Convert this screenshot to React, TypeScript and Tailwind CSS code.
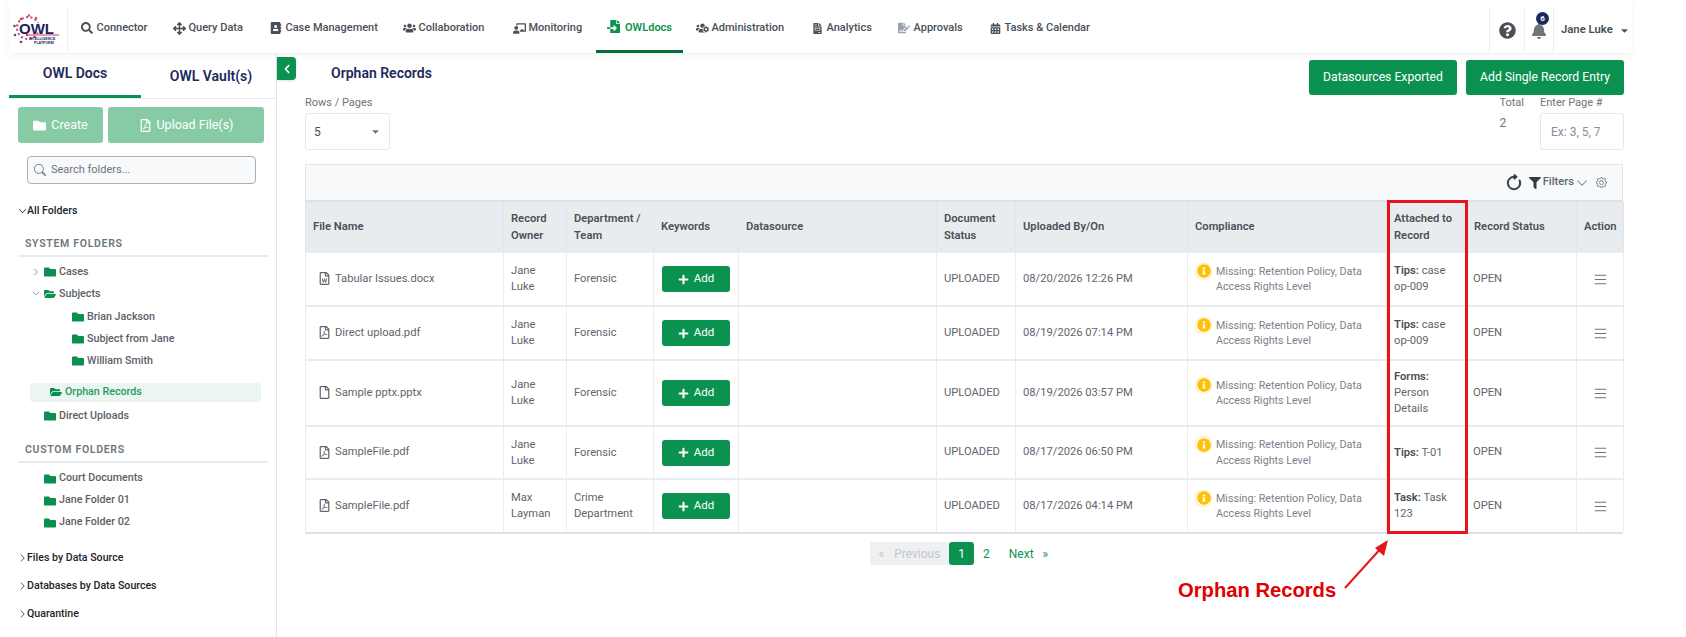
import { ReactNode } from 'react'
import {
  FaAddressBook,
  FaArrowsAlt,
  FaBell,
  FaCalendarAlt,
  FaCaretDown,
  FaChalkboardTeacher,
  FaFileImport,
  FaFileInvoice,
  FaFileSignature,
  FaFilter,
  FaFolder,
  FaFolderOpen,
  FaInfoCircle,
  FaPlus,
  FaQuestionCircle,
  FaRegFile,
  FaRegFilePdf,
  FaRegFileWord,
  FaSearch,
  FaUsers,
  FaUsersCog,
  FaChevronLeft,
} from 'react-icons/fa'
import { BsArrowClockwise, BsChevronDown, BsChevronRight, BsGear, BsList, BsSearch } from 'react-icons/bs'

const navItems = [
  { label: 'Connector', icon: <FaSearch size={12} />, w: 'w-[51px]' },
  { label: 'Query Data', icon: <FaArrowsAlt size={13} />, w: 'w-[56px]' },
  { label: 'Case Management', icon: <FaAddressBook size={12} />, w: 'w-[92px]' },
  { label: 'Collaboration', icon: <FaUsers size={14} />, w: 'w-[69px]' },
  { label: 'Monitoring', icon: <FaChalkboardTeacher size={15} />, w: 'w-[55px]' },
]

const navItemsAfter = [
  { label: 'Administration', icon: <FaUsersCog size={14} />, w: 'w-[74px]' },
  { label: 'Analytics', icon: <FaFileInvoice size={11} />, w: 'w-[46px]' },
  { label: 'Approvals', icon: <FaFileSignature size={12} className="text-gray-400" />, w: 'w-[50px]' },
  { label: 'Tasks & Calendar', icon: <FaCalendarAlt size={11} />, w: 'w-[87px]' },
]

const rows = [
  { file: 'Tabular Issues.docx', icon: <FaRegFileWord size={13} />, owner: ['Jane', 'Luke'], dept: ['Forensic'], at: '08/20/2026 12:26 PM', kind: 'Tips:', rec: ['case', 'op-009'], h: 'h-[54px]' },
  { file: 'Direct upload.pdf', icon: <FaRegFilePdf size={13} />, owner: ['Jane', 'Luke'], dept: ['Forensic'], at: '08/19/2026 07:14 PM', kind: 'Tips:', rec: ['case', 'op-009'], h: 'h-[54px]' },
  { file: 'Sample pptx.pptx', icon: <FaRegFile size={13} />, owner: ['Jane', 'Luke'], dept: ['Forensic'], at: '08/19/2026 03:57 PM', kind: 'Forms:', rec: ['', 'Person', 'Details'], h: 'h-[66px]' },
  { file: 'SampleFile.pdf', icon: <FaRegFilePdf size={13} />, owner: ['Jane', 'Luke'], dept: ['Forensic'], at: '08/17/2026 06:50 PM', kind: 'Tips:', rec: ['T-01'], h: 'h-[53px]' },
  { file: 'SampleFile.pdf', icon: <FaRegFilePdf size={13} />, owner: ['Max', 'Layman'], dept: ['Crime', 'Department'], at: '08/17/2026 04:14 PM', kind: 'Task:', rec: ['Task', '123'], h: 'h-[53px]' },
]

const headers: { label: ReactNode; w: string }[] = [
  { label: 'File Name', w: 'w-[198px]' },
  { label: <>Record<br />Owner</>, w: 'w-[63px]' },
  { label: <>Department /<br />Team</>, w: 'w-[87px]' },
  { label: 'Keywords', w: 'w-[85px]' },
  { label: 'Datasource', w: 'w-[198px]' },
  { label: <>Document<br />Status</>, w: 'w-[79px]' },
  { label: 'Uploaded By/On', w: 'w-[172px]' },
  { label: 'Compliance', w: 'w-[199px]' },
  { label: <>Attached to<br />Record</>, w: 'w-[80px]' },
  { label: 'Record Status', w: 'w-[110px]' },
  { label: 'Action', w: 'w-[47px]' },
]

function Logo() {
  return (
    <svg width="50" height="34" viewBox="0 0 50 34">
      <circle cx="15" cy="14" r="11" fill="none" stroke="#b9487a" strokeWidth="2" strokeDasharray="2 2.5" />
      <circle cx="8" cy="5" r="1.3" fill="#b9487a" />
      <circle cx="16" cy="1.5" r="1.3" fill="#c9566f" />
      <circle cx="23" cy="4" r="1.3" fill="#c9566f" />
      <circle cx="1.5" cy="12" r="1.3" fill="#7a3b8f" />
      <circle cx="2" cy="21" r="1.3" fill="#7a3b8f" />
      <circle cx="8" cy="28" r="1.3" fill="#7a3b8f" />
      <text x="6" y="19.5" fontFamily="Liberation Sans" fontWeight="700" fontSize="15" fill="#1c2260" stroke="#fff" strokeWidth="1.5" paintOrder="stroke" textLength="35" lengthAdjust="spacingAndGlyphs">OWL</text>
      <path d="M14 21H46" stroke="#d8324a" strokeWidth="1" />
      <circle cx="14" cy="21" r="1.2" fill="#d8324a" />
      <text x="16" y="25.5" fontFamily="Liberation Sans" fontWeight="700" fontSize="3.6" fill="#1c2260">INTELLIGENCE</text>
      <text x="21" y="29.5" fontFamily="Liberation Sans" fontWeight="700" fontSize="3.6" fill="#1c2260">PLATFORM</text>
    </svg>
  )
}

function NavLink({ label, icon, w }: { label: string; icon: ReactNode; w: string }) {
  return (
    <div className="flex h-[53px] items-center gap-[3px] px-[12.5px] pt-[3px] text-[#495057]">
      <span className="flex w-[13px] justify-center">{icon}</span>
      <span className={`${w} whitespace-nowrap text-[11px] font-medium`}>{label}</span>
    </div>
  )
}

function TreeRow({ label, indent, open, chevron }: { label: string; indent: string; open?: boolean; chevron?: 'right' | 'down' }) {
  return (
    <div className={`flex h-[22px] items-center text-[10.7px] font-medium text-[#5b6168] ${indent}`}>
      {chevron && (
        <span className="mr-[4px] flex w-[8px] justify-center text-[#6c757d]">
          {chevron === 'right' ? <BsChevronRight size={10} /> : <BsChevronDown size={11} />}
        </span>
      )}
      <span className="mr-[3px] text-[#0b8f50]">{open ? <FaFolderOpen size={12} /> : <FaFolder size={12} />}</span>
      {label}
    </div>
  )
}

function RootRow({ label, open, className }: { label: string; open?: boolean; className: string }) {
  return (
    <div className={`flex h-[22px] items-center pl-[9px] text-[10.6px] font-medium text-[#212529] ${className}`}>
      <span className="flex w-[9px] justify-center">{open ? <BsChevronDown size={10} /> : <BsChevronRight size={10} />}</span>
      {label}
    </div>
  )
}

function Sidebar() {
  return (
    <aside className="h-full w-[268px] shrink-0 border-r border-[#e4e7ea]">
      <div className="flex h-[46px] border-b border-[#e9ecef] text-[14px] font-semibold text-[#1b2a5b]">
        <div className="flex w-[132px] items-center justify-center border-b-[3px] border-[#0b9150] pb-[2px]">OWL Docs</div>
        <div className="flex flex-1 items-center justify-center pl-[5px] pt-[2px]">OWL Vault(s)</div>
      </div>
      <div className="mt-[8px] flex gap-[5px] pl-[9px]">
        <div className="flex h-[36px] w-[85px] items-center justify-center gap-[5px] rounded-[3px] bg-[#86cba6] text-[12.5px] text-white">
          <FaFolder size={13} /> Create
        </div>
        <div className="flex h-[36px] w-[156px] items-center justify-center gap-[5px] rounded-[3px] bg-[#86cba6] text-[12.5px] text-white">
          <FaRegFilePdf size={13} /> Upload File(s)
        </div>
      </div>
      <div className="ml-[18px] mt-[13px] flex h-[28px] w-[229px] items-center gap-[5px] rounded-[4px] border border-[#aab0b6] bg-[#f8f9fa] pl-[6px] text-[11px] text-[#6c757d]">
        <BsSearch size={12} /> Search folders...
      </div>
      <RootRow label="All Folders" open className="mt-[16px]" />
      <div className="ml-[16px] mt-[14px] text-[10.5px] font-semibold tracking-[0.7px] text-[#6c757d]">SYSTEM FOLDERS</div>
      <div className="ml-[9px] mt-[3px] h-[2px] w-[250px] bg-[#e9ecef]" />
      <div className="mt-[4px]">
        <TreeRow label="Cases" indent="pl-[23px]" chevron="right" />
        <TreeRow label="Subjects" indent="pl-[23px]" chevron="down" open />
        <TreeRow label="Brian Jackson" indent="pl-[63px] mt-[1px]" />
        <TreeRow label="Subject from Jane" indent="pl-[63px]" />
        <TreeRow label="William Smith" indent="pl-[63px]" />
        <div className="ml-[21px] mt-[11px] flex h-[19px] w-[231px] items-center rounded-[3px] bg-[#eaf6ef] pl-[20px] text-[10.7px] font-medium text-[#1f9d63]">
          <span className="mr-[3px] text-[#0b8f50]"><FaFolderOpen size={12} /></span>
          Orphan Records
        </div>
        <TreeRow label="Direct Uploads" indent="pl-[35px] mt-[3px]" />
      </div>
      <div className="ml-[16px] mt-[15px] text-[10.5px] font-semibold tracking-[0.7px] text-[#6c757d]">CUSTOM FOLDERS</div>
      <div className="ml-[9px] mt-[3px] h-[2px] w-[250px] bg-[#e9ecef]" />
      <div className="mt-[5px]">
        <TreeRow label="Court Documents" indent="pl-[35px]" />
        <TreeRow label="Jane Folder 01" indent="pl-[35px]" />
        <TreeRow label="Jane Folder 02" indent="pl-[35px]" />
      </div>
      <RootRow label="Files by Data Source" className="mt-[13px]" />
      <RootRow label="Databases by Data Sources" className="mt-[6px]" />
      <RootRow label="Quarantine" className="mt-[6px]" />
    </aside>
  )
}

function RecordsTable() {
  return (
    <table className="w-[1318px] table-fixed border-collapse text-[11.2px] text-[#5f666d]">
      <thead>
        <tr className="h-[50px] bg-[#e9ecef]">
          {headers.map((h, i) => (
            <th key={i} className={`${h.w} whitespace-nowrap border-x border-[#e2e5e9] px-[7px] text-left text-[11.2px] font-semibold leading-[17px] text-[#495057]`}>
              {h.label}
            </th>
          ))}
        </tr>
      </thead>
      <tbody>
        {rows.map((r, i) => (
          <tr key={i} className={`${r.h} border-t-2 border-[#e9ecef]`}>
            <td className="border-x border-[#e9ecef] pl-[12px]">
              <div className="flex items-center gap-[4px]">{r.icon}{r.file}</div>
            </td>
            <td className="border-x border-[#e9ecef] px-[7px] leading-[16px]">
              {r.owner.map((o) => <div key={o}>{o}</div>)}
            </td>
            <td className="border-x border-[#e9ecef] px-[7px] leading-[16px]">
              {r.dept.map((o) => <div key={o}>{o}</div>)}
            </td>
            <td className="border-x border-[#e9ecef] pl-[8px]">
              <div className="flex h-[26px] w-[68px] items-center justify-center gap-[5px] rounded-[3px] bg-[#0b9150] text-[11.5px] text-white">
                <FaPlus size={11} /> Add
              </div>
            </td>
            <td className="border-x border-[#e9ecef]" />
            <td className="border-x border-[#e9ecef] px-[7px]">UPLOADED</td>
            <td className="border-x border-[#e9ecef] px-[7px]">{r.at}</td>
            <td className="border-x border-[#e9ecef] px-[8px]">
              <div className="flex gap-[5px] text-[10.7px] leading-[15.5px] text-[#7b8289]">
                <span className="flex h-[15px] w-[15px] shrink-0 items-center justify-center rounded-full text-[#ffc107] ring-1 ring-[#ffe9a8]">
                  <FaInfoCircle size={14} />
                </span>
                <span>Missing: Retention Policy, Data Access Rights Level</span>
              </div>
            </td>
            <td className="border-x border-[#e9ecef] px-[7px] leading-[16px]">
              <span className="font-semibold text-[#495057]">{r.kind}</span> {r.rec[0]}
              {r.rec.slice(1).map((t) => <div key={t}>{t}</div>)}
            </td>
            <td className="border-x border-[#e9ecef] px-[6px]">OPEN</td>
            <td className="border-x border-[#e9ecef]">
              <div className="flex justify-center text-[#6c757d]"><BsList size={17} /></div>
            </td>
          </tr>
        ))}
      </tbody>
    </table>
  )
}

export default function App() {
  return (
    <div className="relative h-[637px] w-[1686px] overflow-hidden bg-white font-[Roboto,sans-serif]">
      <div className="ml-[9px] h-full w-[1623px]">
        {/* top bar */}
        <header className="relative z-10 flex h-[53px] items-center shadow-[0_2px_6px_rgba(0,0,0,0.06)]">
          <div className="flex h-[45px] w-[59px] items-center self-end border-r border-[#eceef0] pl-[4px]">
            <Logo />
          </div>
          <nav className="flex">
            {navItems.map((n) => <NavLink key={n.label} {...n} />)}
            <div className="flex h-[53px] w-[87px] items-start justify-center gap-[5px] border-b-[3px] border-[#0b6b3a] pt-[20px] text-[#0b9150]">
              <FaFileImport size={13} />
              <span className="text-[11px] font-semibold">OWLdocs</span>
            </div>
            {navItemsAfter.map((n) => <NavLink key={n.label} {...n} />)}
          </nav>
          <div className="ml-auto flex h-[45px] items-center self-end">
            <div className="flex h-full w-[36px] items-center justify-center border-x border-[#eceef0] text-[#495057]">
              <FaQuestionCircle size={17} />
            </div>
            <div className="relative flex h-full w-[29px] items-center justify-center border-r border-[#eceef0] text-[#6c757d]">
              <FaBell size={16} />
              <span className="absolute left-[11px] top-[4px] flex h-[13px] w-[13px] items-center justify-center rounded-full bg-[#1b2a5b] text-[8px] font-bold text-white">6</span>
            </div>
            <div className="flex w-[78px] items-center gap-[6px] whitespace-nowrap pl-[7px] text-[11.3px] font-semibold text-[#495057]">
              Jane Luke <FaCaretDown size={11} />
            </div>
          </div>
        </header>

        <div className="flex h-[584px]">
          <Sidebar />
          <main className="relative flex-1 pl-[28px] pr-[9px] pt-[7px]">
            <button className="absolute left-0 top-[4px] flex h-[23px] w-[19px] items-center justify-center rounded-r-[4px] bg-[#0b9150] text-white shadow">
              <FaChevronLeft size={10} />
            </button>

            <div className="flex items-start justify-between">
              <h1 className="pl-[26px] pt-[3px] text-[14px] font-semibold text-[#1b2a5b]">Orphan Records</h1>
              <div className="flex gap-[9px] text-[12.2px] text-white">
                <div className="flex h-[35px] w-[148px] items-center justify-center rounded-[3px] bg-[#0b9150]">Datasources Exported</div>
                <div className="flex h-[35px] w-[158px] items-center justify-center rounded-[3px] bg-[#0b9150]">Add Single Record Entry</div>
              </div>
            </div>

            <div className="flex justify-between text-[11px] text-[#6c757d]">
              <div>
                <div className="h-[18px]">Rows / Pages</div>
                <div className="flex h-[37px] w-[85px] items-center justify-between rounded-[3px] border border-[#e5e7ea] pl-[8px] pr-[8px] text-[12px] text-[#495057]">
                  5 <FaCaretDown size={11} className="text-[#6c757d]" />
                </div>
              </div>
              <div className="flex gap-[16px]">
                <div>
                  <div className="h-[18px]">Total</div>
                  <div className="pt-[1px] text-[12px]">2</div>
                </div>
                <div>
                  <div className="h-[18px]">Enter Page #</div>
                  <div className="flex h-[37px] w-[84px] items-center rounded-[3px] border border-[#e5e7ea] pl-[10px] text-[12px] text-[#8a9097]">Ex: 3, 5, 7</div>
                </div>
              </div>
            </div>

            <div className="mt-[14px] flex h-[36px] w-[1318px] items-center justify-end gap-[2px] border-x border-t border-[#e2e5e9] bg-[#f8f9fa] pr-[15px] text-[11.2px] text-[#5f666d]">
              <BsArrowClockwise size={18} className="stroke-[0.8px] text-[#343a40]" />
              <FaFilter size={12} className="ml-[4px] text-[#343a40]" />
              <span className="font-medium">Filters</span>
              <BsChevronDown size={12} />
              <BsGear size={11} className="ml-[6px]" />
            </div>
            <div className="h-[2px] w-[1318px] bg-[#dee2e6]" />
            <RecordsTable />
            <div className="h-[2px] w-[1318px] bg-[#dee2e6]" />

            <div className="ml-[565px] mt-[8px] flex h-[23px] items-center text-[12px] text-[#0b9150]">
              <div className="flex h-full w-[79px] items-center justify-center gap-[10px] bg-[#eff0f2] text-[#c3c7cb]"><span>«</span> Previous</div>
              <div className="flex h-full w-[25px] items-center justify-center rounded-[3px] bg-[#0b9150] text-white">1</div>
              <div className="ml-[9px]">2</div>
              <div className="ml-[19px]">Next</div>
              <div className="ml-[9px]">»</div>
            </div>
          </main>
        </div>
      </div>

      {/* annotation drawn over the table */}
      <div className="absolute left-[1387px] top-[200px] h-[334px] w-[81px] border-[3px] border-[#e8141c]" />
      <svg className="absolute left-[1340px] top-[535px]" width="56" height="58" viewBox="0 0 56 58">
        <path d="M5 53L43 11" stroke="#e8141c" strokeWidth="2" />
        <path d="M48 5L35 13L44 21Z" fill="#e8141c" />
      </svg>
      <div className="absolute left-[1178px] top-[575px] font-['Liberation_Sans'] text-[20.2px] font-bold text-[#e00000]">Orphan Records</div>
    </div>
  )
}
